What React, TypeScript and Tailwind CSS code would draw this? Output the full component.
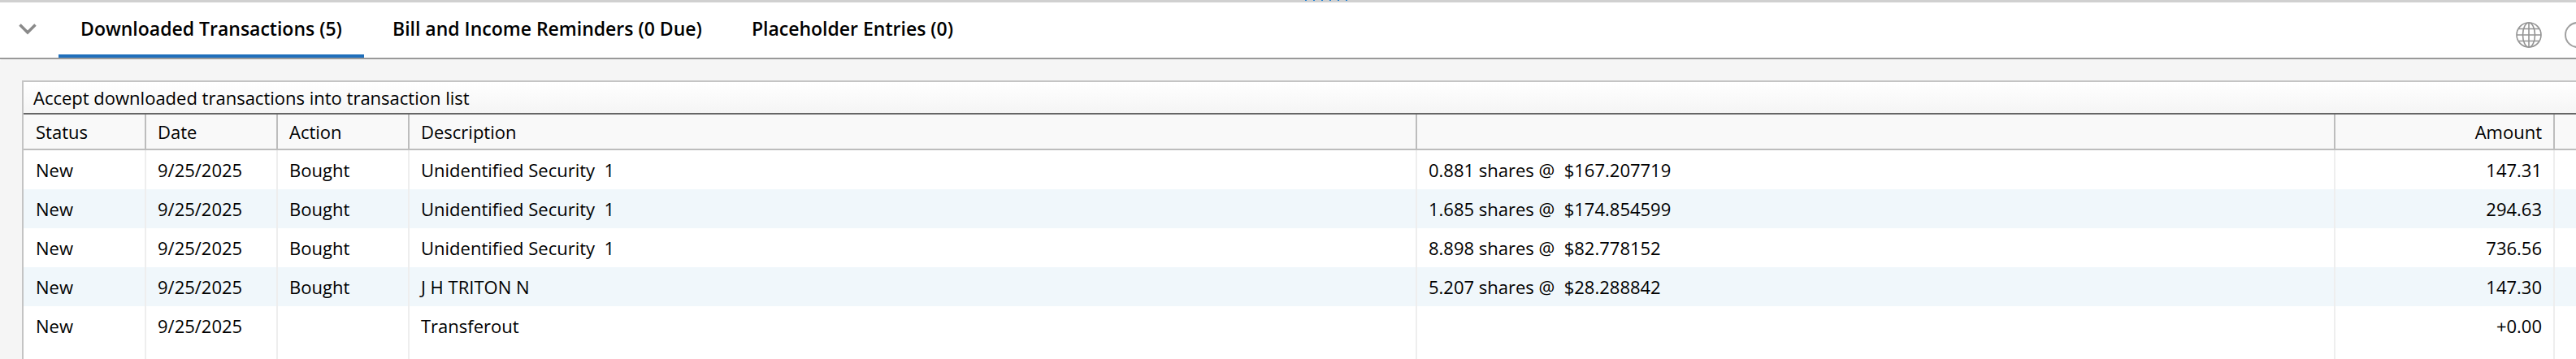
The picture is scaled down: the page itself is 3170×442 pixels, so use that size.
const rows = [
  { action: "Bought", desc: "Unidentified Security  1", detail: "0.881 shares @  $167.207719", amount: "147.31" },
  { action: "Bought", desc: "Unidentified Security  1", detail: "1.685 shares @  $174.854599", amount: "294.63" },
  { action: "Bought", desc: "Unidentified Security  1", detail: "8.898 shares @  $82.778152", amount: "736.56" },
  { action: "Bought", desc: "J H TRITON N", detail: "5.207 shares @  $28.288842", amount: "147.30" },
  { action: "", desc: "Transferout", detail: "", amount: "+0.00" },
];

const cols = "grid grid-cols-[151px_162px_162px_1240px_1130px_270px_1fr]";

function Globe() {
  return (
    <svg width="32" height="32" viewBox="0 0 32 32" fill="none" stroke="#949494" strokeWidth="1.6">
      <circle cx="16" cy="16" r="15" />
      <ellipse cx="16" cy="16" rx="7.5" ry="15" />
      <path d="M16 1v30M1 16h30M3.5 8.5h25M3.5 23.5h25" />
    </svg>
  );
}

export default function App() {
  return (
    <div className="h-[442px] w-[3170px] overflow-hidden bg-white font-['Open_Sans','Liberation_Sans',sans-serif] text-[22px] text-black">
      <div className="flex h-[3px] gap-[8px] bg-[#d0d0d0] pl-[1606px]">
        {[0, 1, 2, 3, 4, 5].map((i) => (
          <span key={i} className="h-[1px] w-[2px] bg-[#1a7fd4]" />
        ))}
      </div>
      <div className="flex h-[70px] items-stretch border-b-2 border-[#999999] text-[23px] font-semibold">
        <div className="flex w-[72px] items-center justify-center pb-[2px] pr-[5px]">
          <svg width="22" height="14" viewBox="0 0 22 14" fill="none" stroke="#8a8a8a" strokeWidth="3.5">
            <path d="M1.5 1.5l9.5 9.5 9.5-9.5" />
          </svg>
        </div>
        <div className="flex w-[376px] items-center justify-center border-b-4 border-[#1f6fbb]">
          Downloaded Transactions (5)
        </div>
        <div className="ml-[35px] flex items-center pb-[4px]">Bill and Income Reminders (0 Due)</div>
        <div className="ml-[61px] flex items-center pb-[4px]">Placeholder Entries (0)</div>
        <div className="ml-auto flex items-center gap-[28px] pt-[12px]">
          <Globe />
          <div className="-mr-[18px] h-[32px] w-[32px] rounded-full border-2 border-[#a0a0a0]" />
        </div>
      </div>
      <div className="rounded-tl-[3px] bg-[#f5f5f5] pl-[27px] pt-[26px]">
        <div className="h-[343px] border-l-2 border-t-2 border-[#c4c4c4] bg-white">
          <div className="flex h-[38px] items-center bg-gradient-to-b from-white to-[#f5f5f5] pl-[12px]">
            Accept downloaded transactions into transaction list
          </div>
          <div className={`${cols} h-[46px] border-y-2 border-t-[#666666] border-b-[#bdbdbd] bg-[#f9f9f9]`}>
            {["Status", "Date", "Action", "Description", "", "Amount", ""].map((h, i) => (
              <div
                key={i}
                className={`flex items-center border-r-2 border-[#bdbdbd] px-[14px] first:pl-[15px] last:border-r-0 ${i === 5 ? "justify-end" : ""}`}
              >
                {h}
              </div>
            ))}
          </div>
          {rows.map((r, i) => (
            <div key={i} className={`${cols} h-[48px] ${i % 2 === 1 ? "bg-[#f0f7fb]" : "bg-white"}`}>
              {["New", "9/25/2025", r.action, r.desc, r.detail, r.amount, ""].map((c, j) => (
                <div
                  key={j}
                  className={`flex items-center whitespace-pre border-r-2 border-[#eeeeee] px-[14px] first:pl-[15px] last:border-r-0 ${j === 5 ? "justify-end" : ""}`}
                >
                  {c}
                </div>
              ))}
            </div>
          ))}
          <div className={`${cols} h-[17px]`}>
            {[0, 1, 2, 3, 4, 5, 6].map((j) => (
              <div key={j} className="border-r-2 border-[#eeeeee] last:border-r-0" />
            ))}
          </div>
        </div>
      </div>
    </div>
  );
}
